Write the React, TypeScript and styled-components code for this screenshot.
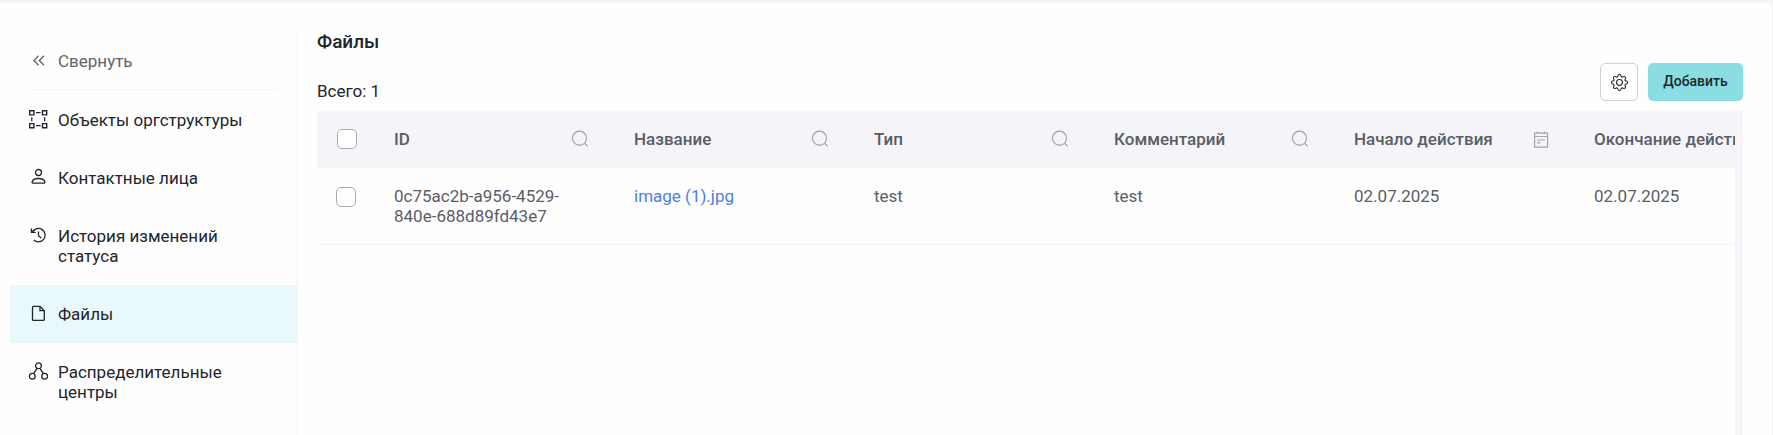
import React from "react";
import styled, { createGlobalStyle } from "styled-components";
import { BsGear } from "react-icons/bs";

const GlobalStyle = createGlobalStyle`
  *, *::before, *::after { box-sizing: border-box; }
  body {
    margin: 0;
    background: #f4f4f9;
    color: #22252b;
    font: 400 17px/20px Roboto, "Liberation Sans", sans-serif;
  }
`;

const Page = styled.div`
  display: flex;
  min-height: 100vh;
  padding: 3px 1px 0 0;
`;

const Panel = styled.div`
  display: flex;
  flex: 1;
  min-width: 0;
  gap: 19px;
  padding: 29px 29px 0 10px;
  background: #fefefe;
  border-top-right-radius: 8px;
`;

const Sidebar = styled.nav`
  flex: 0 0 288px;
  border-right: 1px solid #f4f4f8;
`;

const CollapseButton = styled.button`
  display: flex;
  gap: 10px;
  width: calc(100% - 38px);
  margin: 0 18px 1px 20px;
  padding: 19px 0 18px;
  border: 0;
  border-bottom: 1px solid #f4f4f8;
  background: none;
  color: #5f636c;
  font: inherit;
  text-align: left;
  cursor: pointer;

  svg { margin-left: -2px; }
`;

const NavLink = styled.a<{ $active?: boolean }>`
  display: flex;
  gap: 10px;
  padding: 19px 50px 19px 18px;
  background: ${(p) => (p.$active ? "#e9f8fa" : "transparent")};
  color: inherit;
  text-decoration: none;
`;

const Icon = styled.svg`
  flex: none;
  width: 20px;
  height: 20px;
  fill: none;
  stroke: currentColor;
  stroke-width: 1.3;
`;

const Main = styled.main`
  display: flex;
  flex: 1;
  flex-direction: column;
  min-width: 0;
`;

const Title = styled.h1`
  margin: 0 0 11px;
  font-size: 19px;
  font-weight: 500;
  line-height: 20px;
`;

const Toolbar = styled.div`
  display: flex;
  align-items: flex-end;
  gap: 10px;
  margin-bottom: 10px;
`;

const Total = styled.span`
  flex: 1;
`;

const SettingsButton = styled.button`
  display: grid;
  place-items: center;
  width: 38px;
  height: 38px;
  padding: 0;
  border: 1px solid #cfcfdc;
  border-radius: 5px;
  background: #fefefe;
  color: #22252b;
  cursor: pointer;
`;

const AddButton = styled.button`
  min-width: 95px;
  height: 38px;
  padding: 0 14px 2px;
  border: 0;
  border-radius: 5px;
  background: #8adde1;
  color: #22252b;
  font: 500 14px/20px Roboto, "Liberation Sans", sans-serif;
  cursor: pointer;
`;

const TableArea = styled.div`
  display: flex;
  flex: 1;
`;

const TableScroller = styled.div`
  flex: 1;
  min-width: 0;
  overflow-x: auto;
  scrollbar-width: none;
`;

const ScrollTrack = styled.div`
  flex: 0 0 8px;
  background: #f4f4f9;
`;

const Table = styled.table`
  width: 1497px;
  table-layout: fixed;
  border-collapse: separate;
  border-spacing: 0;
  color: #5a5d65;
`;

const SelectCol = styled.col`
  width: 57px;
`;

const HeadCell = styled.th`
  height: 57px;
  padding: 0 25px 2px 20px;
  background: #f4f4f9;
  font-weight: 500;
  text-align: left;
  white-space: nowrap;
`;

const HeadContent = styled.div`
  display: flex;
  align-items: center;
  justify-content: space-between;
`;

const FilterButton = styled.button`
  display: flex;
  padding: 0;
  border: 0;
  background: none;
  color: #a3a3b3;
  cursor: pointer;

  svg {
    width: 18px;
    height: 18px;
    stroke-width: 1.2;
  }
`;

const Cell = styled.td`
  padding: 18px 25px 18px 20px;
  border-bottom: 1px solid #f4f4f8;
  vertical-align: top;
`;

const SelectHead = styled(HeadCell)`
  padding: 0 0 2px 20px;
`;

const SelectCell = styled(Cell)`
  padding: 19px 0 18px 19px;
`;

const Checkbox = styled.input`
  display: block;
  appearance: none;
  width: 20px;
  height: 20px;
  margin: 0;
  border: 1px solid #a8a8b8;
  border-radius: 5px;
  background: #fff;

  &:checked { background: #8adde1; }
`;

const FileLink = styled.a`
  color: #4a7fe8;
  text-decoration: none;
`;

const CollapseIcon = () => (
  <Icon viewBox="0 0 20 20" aria-hidden="true">
    <path d="M10.5 4.8 6 9.5l4.5 4.7M15.9 4.8l-4.5 4.7 4.5 4.7" />
  </Icon>
);

const StructureIcon = () => (
  <Icon viewBox="0 0 20 20" aria-hidden="true">
    <path d="M1.7 .7h4.2v4.2H1.7zM14.5 .7h4.2v4.2h-4.2zM1.7 13.6h4.2v4.2H1.7zM14.5 13.6h4.2v4.2h-4.2z" strokeWidth="1.4" />
    <path d="M8 2.6h4.6M8 15.6h4.6M3.8 7.2v4M16.6 7.2v4" />
  </Icon>
);

const PersonIcon = () => (
  <Icon viewBox="0 0 20 20" aria-hidden="true">
    <circle cx="10.5" cy="4.5" r="3" />
    <path d="M5.2 15.2c-1 0-1.3-.5-1.1-1.2.5-2.2 3-3.5 6.4-3.5s5.9 1.3 6.4 3.5c.2.7-.1 1.2-1.1 1.2z" />
  </Icon>
);

const HistoryIcon = () => (
  <Icon viewBox="0 0 20 20" aria-hidden="true">
    <path d="M4.6 5.8A6.7 6.7 0 1 1 5.8 14" />
    <path d="M3.4 2.4v3.9h4.4M3.6 6.1l3-2.4M10.5 5.4v4.4l2.8 2.4" />
  </Icon>
);

const FileIcon = () => (
  <Icon viewBox="0 0 20 20" aria-hidden="true">
    <path d="M5.5 2.4h6.5l4.3 4.3v8.7a1 1 0 0 1-1 1H5.5a1 1 0 0 1-1-1v-12a1 1 0 0 1 1-1z" />
    <path d="M12 2.4v4.3h4.3" />
  </Icon>
);

const CentersIcon = () => (
  <Icon viewBox="0 0 20 20" aria-hidden="true">
    <circle cx="10.5" cy="3.8" r="2.9" />
    <circle cx="4.3" cy="14.2" r="2.9" />
    <circle cx="16.7" cy="14.2" r="2.9" />
    <path d="M9 6.3 5.7 11.7M12 6.3l3.3 5.4" />
  </Icon>
);

const SearchIcon = () => (
  <Icon viewBox="0 0 18 18" aria-hidden="true">
    <circle cx="8.5" cy="8.2" r="7" />
    <path d="m13.4 13.2 3.5 3.2" />
  </Icon>
);

const CalendarIcon = () => (
  <Icon viewBox="0 0 18 18" aria-hidden="true">
    <path d="M3.6 3.2h13v14h-13zM3.6 6.5h13M6.5 1.4v1.8M13.6 1.4v1.8M6 10h8M6 12.9h3.6" />
  </Icon>
);

const navItems = [
  { label: "Объекты оргструктуры", icon: <StructureIcon /> },
  { label: "Контактные лица", icon: <PersonIcon /> },
  { label: "История изменений статуса", icon: <HistoryIcon /> },
  { label: "Файлы", icon: <FileIcon />, active: true },
  { label: "Распределительные центры", icon: <CentersIcon /> },
];

const columns: { title: string; filter: "search" | "date" }[] = [
  { title: "ID", filter: "search" },
  { title: "Название", filter: "search" },
  { title: "Тип", filter: "search" },
  { title: "Комментарий", filter: "search" },
  { title: "Начало действия", filter: "date" },
  { title: "Окончание действия", filter: "date" },
];

const files = [
  {
    id: "0c75ac2b-a956-4529-840e-688d89fd43e7",
    name: "image (1).jpg",
    type: "test",
    comment: "test",
    start: "02.07.2025",
    end: "02.07.2025",
  },
];

export default function App() {
  return (
    <>
      <GlobalStyle />
      <Page>
        <Panel>
          <Sidebar>
            <CollapseButton type="button">
              <CollapseIcon />
              Свернуть
            </CollapseButton>
            {navItems.map((item) => (
              <NavLink
                key={item.label}
                href="#"
                $active={item.active}
                aria-current={item.active ? "page" : undefined}
              >
                {item.icon}
                <span>{item.label}</span>
              </NavLink>
            ))}
          </Sidebar>
          <Main>
            <Title>Файлы</Title>
            <Toolbar>
              <Total>Всего: {files.length}</Total>
              <SettingsButton type="button" aria-label="Настройки">
                <BsGear size={17} />
              </SettingsButton>
              <AddButton type="button">Добавить</AddButton>
            </Toolbar>
            <TableArea>
              <TableScroller>
                <Table>
                  <colgroup>
                    <SelectCol />
                    {columns.map((c) => (
                      <col key={c.title} />
                    ))}
                  </colgroup>
                  <thead>
                    <tr>
                      <SelectHead>
                        <Checkbox type="checkbox" aria-label="Выбрать все" />
                      </SelectHead>
                      {columns.map((c) => (
                        <HeadCell key={c.title} scope="col">
                          <HeadContent>
                            {c.title}
                            <FilterButton type="button" aria-label={`Фильтр: ${c.title}`}>
                              {c.filter === "search" ? <SearchIcon /> : <CalendarIcon />}
                            </FilterButton>
                          </HeadContent>
                        </HeadCell>
                      ))}
                    </tr>
                  </thead>
                  <tbody>
                    {files.map((f) => (
                      <tr key={f.id}>
                        <SelectCell>
                          <Checkbox type="checkbox" aria-label={`Выбрать ${f.name}`} />
                        </SelectCell>
                        <Cell>{f.id}</Cell>
                        <Cell>
                          <FileLink href="#">{f.name}</FileLink>
                        </Cell>
                        <Cell>{f.type}</Cell>
                        <Cell>{f.comment}</Cell>
                        <Cell>{f.start}</Cell>
                        <Cell>{f.end}</Cell>
                      </tr>
                    ))}
                  </tbody>
                </Table>
              </TableScroller>
              <ScrollTrack />
            </TableArea>
          </Main>
        </Panel>
      </Page>
    </>
  );
}
